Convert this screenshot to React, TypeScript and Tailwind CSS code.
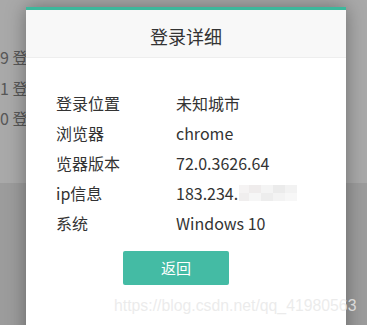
const rows = [
  { label: '登录位置', value: '未知城市' },
  { label: '浏览器', value: 'chrome' },
  { label: '览器版本', value: '72.0.3626.64' },
  { label: 'ip信息', value: '183.234.', masked: true },
  { label: '系统', value: 'Windows 10' },
];

const font = { fontFamily: '"Noto Sans CJK SC", "Noto Sans", sans-serif' };

function Mosaic() {
  return (
    <span className="inline-flex flex-col align-middle ml-[1px]">
      <span className="flex">
        <span className="w-[10px] h-[8px] bg-[#f5f3f3]" />
        <span className="w-[12px] h-[8px] bg-[#efecec]" />
        <span className="w-[12px] h-[8px] bg-[#f4f4f4]" />
        <span className="w-[12px] h-[8px] bg-[#ebebeb]" />
        <span className="w-[12px] h-[8px] bg-[#f2f2f2]" />
      </span>
      <span className="flex">
        <span className="w-[10px] h-[8px] bg-[#f0eeee]" />
        <span className="w-[12px] h-[8px] bg-[#f6f6f6]" />
        <span className="w-[12px] h-[8px] bg-[#ededed]" />
        <span className="w-[12px] h-[8px] bg-[#f3f3f3]" />
        <span className="w-[12px] h-[8px] bg-[#f7f7f7]" />
      </span>
    </span>
  );
}

export default function App() {
  return (
    <div className="relative w-full h-[325px] overflow-hidden" style={font}>
      {/* page behind the overlay */}
      <div className="h-[183px] bg-[#a9a9a9] pt-[45px] text-[16px] text-[#575757]">
        <div className="h-[31px] leading-[24px]">9 登</div>
        <div className="h-[30px] leading-[24px]">1 登</div>
        <div className="h-[30px] leading-[24px]">0 登</div>
      </div>
      <div className="h-[142px] bg-[#9c9c9c]" />

      {/* dialog */}
      <div className="absolute left-[26px] top-[7px] w-[320px] h-[340px] bg-white border-t-[3px] border-[#3cb89c] shadow-[0_0_18px_rgba(0,0,0,0.35)]">
        <div className="h-[48px] bg-[#f8f8f8] border-b border-[#eeeeee] flex items-center justify-center pt-[6px] text-[18px] text-[#333333]">
          登录详细
        </div>
        <div className="pt-[30px] pl-[30px] text-[16px] text-[#333333]">
          {rows.map((r) => (
            <div key={r.label} className="flex h-[30px] items-center">
              <span className="w-[120px]">{r.label}</span>
              <span className="flex items-center">
                {r.value}
                {r.masked && <Mosaic />}
              </span>
            </div>
          ))}
          <button className="mt-[13px] ml-[67px] w-[106px] h-[34px] rounded-[2px] bg-[#44bba4] text-white text-[15px]">
            返回
          </button>
        </div>
      </div>

      {/* watermark */}
      <div
        className="absolute left-[114px] top-[294px] whitespace-nowrap text-[15.8px] leading-[24px] text-[rgba(232,232,232,0.85)]"
        style={{ fontFamily: '"Liberation Sans", Arial, sans-serif' }}
      >
        https://blog.csdn.net/qq_41980563
      </div>
    </div>
  );
}
